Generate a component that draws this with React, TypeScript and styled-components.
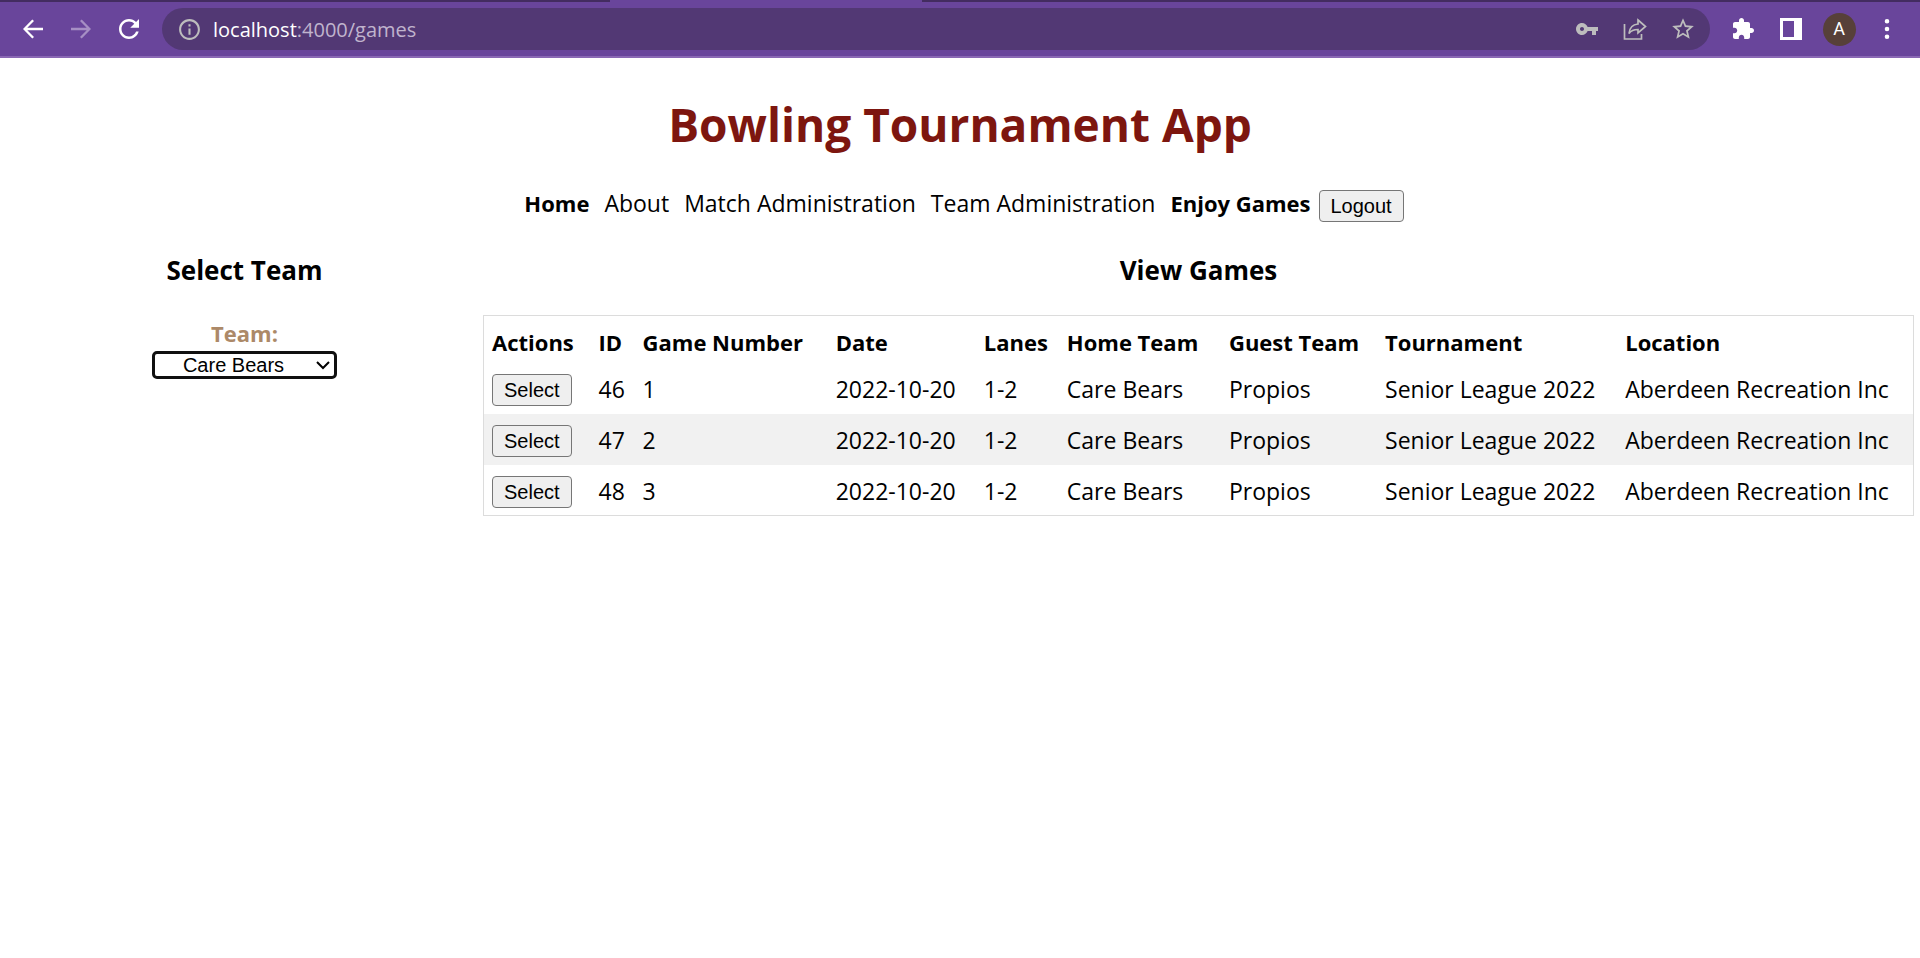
import React from "react";
import styled, { createGlobalStyle } from "styled-components";

const GlobalStyle = createGlobalStyle`
  * { box-sizing: border-box; }
  body { margin: 0; background: #fff; color: #000; font-family: "Open Sans", sans-serif; font-size: 23px; line-height: 32px; }
`;

const TabStrip = styled.div`
  display: flex;
  justify-content: center;
  height: 2px;
  background: #432c60;
`;
const ActiveTab = styled.div`
  width: 312px;
  margin-right: 388px;
  background: #69459b;
`;
const Toolbar = styled.header`
  display: flex;
  align-items: center;
  height: 56px;
  padding: 0 9px;
  background: #69459b;
  border-bottom: 2px solid #8a68b4;
`;
const IconButton = styled.button<{ $color?: string }>`
  display: flex;
  flex: none;
  align-items: center;
  justify-content: center;
  width: 48px;
  height: 42px;
  padding: 0;
  border: 0;
  background: none;
  color: ${(p) => p.$color ?? "#fff"};
`;
const AddressBar = styled.div`
  display: flex;
  flex: 1;
  align-items: center;
  height: 42px;
  margin: 0 9px;
  padding: 0 3px;
  border-radius: 21px;
  background: #523874;
`;
const Address = styled.div`
  flex: 1;
  padding-top: 2px;
  font-size: 20px;
  color: #c0b4cd;
`;
const Host = styled.span`
  color: #fff;
`;
const Avatar = styled.span`
  display: flex;
  align-items: center;
  justify-content: center;
  width: 33px;
  height: 33px;
  border-radius: 50%;
  background: #574039;
  color: #fff;
  font: 18px/20px Roboto, sans-serif;
`;
const Title = styled.h1`
  margin: 34px 0 31px;
  font-size: 46px;
  line-height: 64px;
  text-align: center;
  color: #7d160f;
`;
const Nav = styled.nav`
  display: flex;
  justify-content: center;
  align-items: flex-start;
  padding-left: 8px;
`;
const NavLink = styled.a<{ $strong?: boolean }>`
  padding-right: 15px;
  color: #000;
  text-decoration: none;
  font-size: ${(p) => (p.$strong ? 22 : 23)}px;
  font-weight: ${(p) => (p.$strong ? 700 : 400)};
  &:last-of-type { padding-right: 8px; }
`;
const Button = styled.button`
  height: 32px;
  padding: 0 11px;
  border: 1px solid #767676;
  border-radius: 4px;
  background: #efefef;
  color: #000;
  font: 20px/24px "Liberation Sans", sans-serif;
`;
const NavButton = styled(Button)`
  margin-top: 3px;
`;
const Columns = styled.main`
  display: grid;
  grid-template-columns: 1fr 3fr;
  padding: 0 6px;
`;
const SectionTitle = styled.h2`
  margin: 28px 0 25px;
  font-size: 26px;
  line-height: 40px;
  text-align: center;
`;
const Field = styled.div`
  display: flex;
  flex-direction: column;
  align-items: center;
`;
const Label = styled.label`
  padding-top: 2px;
  margin-bottom: 2px;
  font-size: 22px;
  font-weight: 700;
  color: #ac8968;
`;
const SelectBox = styled.div`
  position: relative;
  width: 185px;
`;
const Select = styled.select`
  display: block;
  width: 100%;
  height: 28px;
  padding: 0 22px 0 0;
  border: 3px solid #101010;
  border-radius: 5px;
  background: #fff;
  color: #000;
  appearance: none;
  text-align: center;
  text-align-last: center;
  font: 20px/22px "Liberation Sans", sans-serif;
`;
const Chevron = styled.svg`
  position: absolute;
  top: 10px;
  right: 7px;
  pointer-events: none;
`;
const Table = styled.table`
  width: 100%;
  border: 1px solid #dcdcdc;
  border-collapse: collapse;
`;
const Row = styled.tr`
  height: 51px;
  &:nth-child(even) { background: #f1f1f1; }
`;
const Th = styled.th<{ $width: number }>`
  width: ${(p) => p.$width}px;
  height: 47px;
  padding: 5px 0 0 8px;
  font-size: 22px;
  text-align: left;
  white-space: nowrap;
`;
const Td = styled.td`
  padding: 2px 0 0 8px;
  white-space: nowrap;
`;

const Glyph = ({ d, size = 24 }: { d: string; size?: number }) => (
  <svg width={size} height={size} viewBox="0 0 24 24" fill="currentColor" aria-hidden="true">
    <path d={d} />
  </svg>
);

const BACK = "M22 10.800H6.300l6.700-6.700L11.300 2.400 2 12l9.300 9.600 1.700-1.700L6.300 13.200H22z";
const FORWARD = "M2 10.800h15.700L11 4.100l1.700-1.700L22 12l-9.300 9.600-1.700-1.700 6.700-6.700H2z";
const RELOAD = "M17.65 6.35C16.2 4.9 14.21 4 12 4c-4.42 0-7.99 3.58-7.99 8s3.57 8 7.99 8c3.73 0 6.84-2.55 7.73-6h-2.08c-.82 2.33-3.04 4-5.65 4-3.31 0-6-2.69-6-6s2.69-6 6-6c1.66 0 3.14.69 4.22 1.78L13 11h7V4l-2.35 2.35z";
const INFO = "M11 7h2v2h-2zm0 4h2v6h-2zm1-9C6.48 2 2 6.48 2 12s4.48 10 10 10 10-4.480 10-10S17.52 2 12 2zm0 18c-4.410 0-8-3.590-8-8s3.590-8 8-8 8 3.590 8 8-3.590 8-8 8z";
const KEY = "M12.65 10C11.83 7.67 9.61 6 7 6c-3.31 0-6 2.69-6 6s2.69 6 6 6c2.61 0 4.83-1.67 5.65-4H17v4h4v-4h2v-4H12.65zM7 14c-1.1 0-2-.9-2-2s.9-2 2-2 2 .9 2 2-.9 2-2 2z";
const STAR = "M22 9.24l-7.19-.62L12 2 9.19 8.63 2 9.24l5.46 4.73L5.82 21 12 17.27 18.18 21l-1.63-7.03L22 9.24zM12 15.4l-3.76 2.27 1-4.28-3.32-2.88 4.38-.38L12 6.1l1.71 4.04 4.38.38-3.32 2.88 1 4.28L12 15.4z";
const PUZZLE = "M20.5 11H19V7c0-1.1-.9-2-2-2h-4V3.5C13 2.12 11.88 1 10.5 1S8 2.12 8 3.5V5H4c-1.1 0-1.99.9-1.99 2v3.8H3.5c1.49 0 2.7 1.21 2.7 2.7s-1.21 2.7-2.7 2.7H2V20c0 1.1.9 2 2 2h3.8v-1.5c0-1.49 1.21-2.7 2.7-2.7 1.49 0 2.7 1.21 2.7 2.7V22H17c1.1 0 2-.9 2-2v-4h1.5c1.38 0 2.5-1.12 2.5-2.5S21.88 11 20.5 11z";
const DOTS = "M12 2a2.300 2.300 0 1 1 0 4.600 2.300 2.300 0 0 1 0-4.600zm0 7.700a2.300 2.300 0 1 1 0 4.600 2.300 2.300 0 0 1 0-4.600zm0 7.700a2.300 2.300 0 1 1 0 4.600 2.300 2.300 0 0 1 0-4.600z";

const ShareIcon = () => (
  <svg width="24" height="24" viewBox="0 0 24 24" fill="none" stroke="currentColor" strokeWidth="1.700" aria-hidden="true">
    <path d="M1.500 7v15h17v-5" />
    <path d="M15 3l7.500 6.500L15 16v-3.500c-4 0-7 1-9 4 .5-5.500 3.500-9 9-9.500z" />
  </svg>
);
const PanelIcon = () => (
  <svg width="22" height="22" viewBox="0 0 22 22" fill="currentColor" fillRule="evenodd" aria-hidden="true">
    <path d="M0 0h22v22H0zM3 3v16h11V3z" />
  </svg>
);

const columns = [
  { name: "Actions", width: 107 },
  { name: "ID", width: 44 },
  { name: "Game Number", width: 193 },
  { name: "Date", width: 148 },
  { name: "Lanes", width: 83 },
  { name: "Home Team", width: 162 },
  { name: "Guest Team", width: 156 },
  { name: "Tournament", width: 240 },
  { name: "Location", width: 296 },
];
const games = [
  { id: 46, number: 1 },
  { id: 47, number: 2 },
  { id: 48, number: 3 },
].map((g) => ({
  ...g,
  date: "2022-10-20",
  lanes: "1-2",
  home: "Care Bears",
  guest: "Propios",
  tournament: "Senior League 2022",
  location: "Aberdeen Recreation Inc",
}));

export default function App() {
  return (
    <>
      <GlobalStyle />
      <TabStrip><ActiveTab /></TabStrip>
      <Toolbar>
        <IconButton aria-label="Back"><Glyph d={BACK} /></IconButton>
        <IconButton aria-label="Forward" $color="#a68fc4"><Glyph d={FORWARD} /></IconButton>
        <IconButton aria-label="Reload"><Glyph d={RELOAD} size={30} /></IconButton>
        <AddressBar>
          <IconButton aria-label="Site information" $color="#bdbdbd"><Glyph d={INFO} size={25} /></IconButton>
          <Address><Host>localhost</Host>:4000/games</Address>
          <IconButton aria-label="Passwords" $color="#bdbdbd"><Glyph d={KEY} /></IconButton>
          <IconButton aria-label="Share" $color="#bdbdbd"><ShareIcon /></IconButton>
          <IconButton aria-label="Bookmark" $color="#bdbdbd"><Glyph d={STAR} size={26} /></IconButton>
        </AddressBar>
        <IconButton aria-label="Extensions"><Glyph d={PUZZLE} /></IconButton>
        <IconButton aria-label="Side panel"><PanelIcon /></IconButton>
        <IconButton aria-label="Profile"><Avatar>A</Avatar></IconButton>
        <IconButton aria-label="Menu"><Glyph d={DOTS} /></IconButton>
      </Toolbar>
      <Title>Bowling Tournament App</Title>
      <Nav>
        <NavLink href="#home" $strong>Home</NavLink>
        <NavLink href="#about">About</NavLink>
        <NavLink href="#matches">Match Administration</NavLink>
        <NavLink href="#teams">Team Administration</NavLink>
        <NavLink href="#games" $strong>Enjoy Games</NavLink>
        <NavButton>Logout</NavButton>
      </Nav>
      <Columns>
        <section>
          <SectionTitle>Select Team</SectionTitle>
          <Field>
            <Label htmlFor="team">Team:</Label>
            <SelectBox>
              <Select id="team" defaultValue="Care Bears">
                <option>Care Bears</option>
                <option>Propios</option>
              </Select>
              <Chevron width="14" height="9" viewBox="0 0 14 9" fill="none" stroke="#000" strokeWidth="2">
                <path d="M1 1l6 6 6-6" />
              </Chevron>
            </SelectBox>
          </Field>
        </section>
        <section>
          <SectionTitle>View Games</SectionTitle>
          <Table>
            <thead>
              <tr>{columns.map((c) => <Th key={c.name} $width={c.width}>{c.name}</Th>)}</tr>
            </thead>
            <tbody>
              {games.map((g) => (
                <Row key={g.id}>
                  <Td><Button>Select</Button></Td>
                  <Td>{g.id}</Td>
                  <Td>{g.number}</Td>
                  <Td>{g.date}</Td>
                  <Td>{g.lanes}</Td>
                  <Td>{g.home}</Td>
                  <Td>{g.guest}</Td>
                  <Td>{g.tournament}</Td>
                  <Td>{g.location}</Td>
                </Row>
              ))}
            </tbody>
          </Table>
        </section>
      </Columns>
    </>
  );
}
